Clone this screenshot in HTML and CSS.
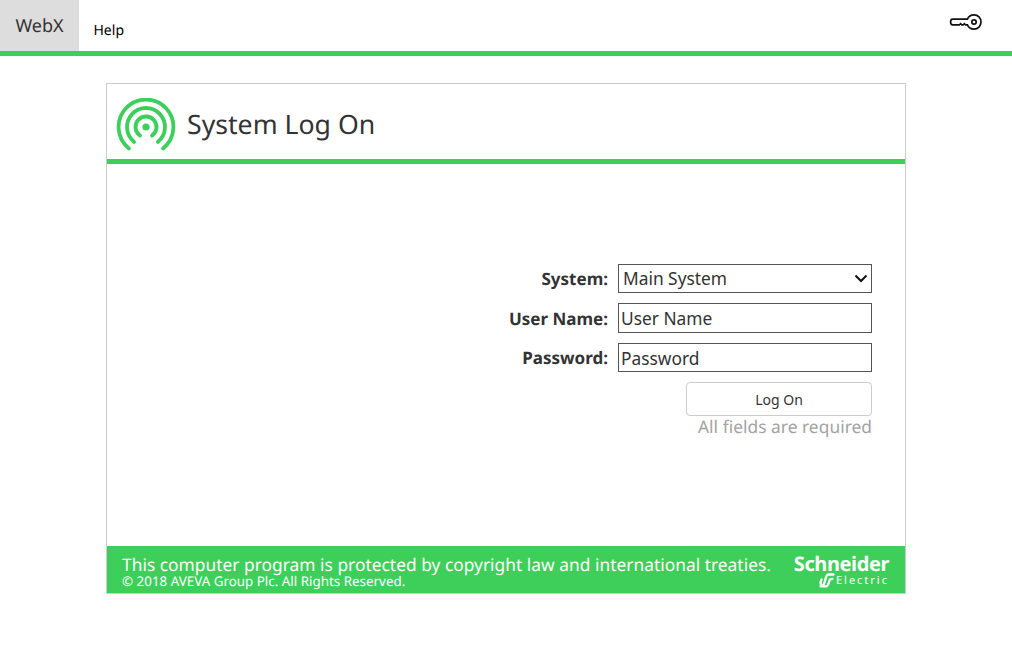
FILE: index.html
```
<!DOCTYPE html>
<html lang="en">
<head>
<meta charset="utf-8">
<title>System Log On</title>
<link rel="stylesheet" href="styles.css">
</head>
<body>
<header class="topbar">
  <div class="brand">WebX</div>
  <nav class="nav"><a class="nav-link">Help</a></nav>
  <svg class="key" width="34" height="18" viewBox="0 0 34 18" fill="none" stroke="#111" stroke-width="1.7">
    <path d="M3.6 5.2H18.4C19.5 2.6 22 0.9 25 0.9C29 0.9 32 4 32 8C32 12 29 15.1 25 15.1C22 15.1 19.5 13.4 18.4 10.8H16.5L15.4 9.7L14.2 10.8H12.8L11.6 9.7L10.4 10.8H3.6C2 10.8 1.6 9.5 1.6 8C1.6 6.5 2 5.2 3.6 5.2Z"/>
    <circle cx="25" cy="8" r="2.2"/>
  </svg>
</header>
<main class="card">
  <div class="card-head">
    <svg class="logo" width="60" height="56" viewBox="0 0 60 56" fill="none" stroke="#3ecf5b" stroke-width="3.8" stroke-linecap="round">
      <path d="M13 50.4A27.4 27.4 0 1 1 47 50.4"/>
      <path d="M18.2 43.9A19 19 0 1 1 41.8 43.9"/>
      <path d="M24 37.6A10.5 10.5 0 1 1 36 37.6"/>
      <circle cx="30" cy="29" r="3.6" fill="#3ecf5b" stroke="none"/>
    </svg>
    <h1 class="title">System Log On</h1>
  </div>
  <div class="card-body">
    <form class="form">
      <div class="row">
        <label class="label">System:</label>
        <select class="field select"><option>Main System</option></select>
      </div>
      <div class="row">
        <label class="label label-low">User Name:</label>
        <input class="field" type="text" value="User Name">
      </div>
      <div class="row">
        <label class="label">Password:</label>
        <input class="field field-short" type="text" value="Password">
      </div>
      <button class="button" type="button">Log On</button>
      <div class="hint">All fields are required</div>
    </form>
  </div>
  <footer class="card-foot">
    <div class="legal">
      <div class="legal-main">This computer program is protected by copyright law and international treaties.</div>
      <div class="legal-small">© 2018 AVEVA Group Plc. All Rights Reserved.</div>
    </div>
    <div class="se">
      <div class="se-name">Schneider</div>
      <div class="se-sub">
        <svg width="16" height="15" viewBox="0 0 16 15" fill="none" stroke="#fff" stroke-width="2.3" stroke-linecap="round">
          <path d="M14.5 1.5H9.5C7 1.5 6.8 5 5.8 8.5C5.2 11 4.2 13.4 1.5 13.4"/>
          <path d="M2.6 6.5C1 9 1.2 13.4 4.5 13.4H7C9.2 13.4 9.8 10 10.6 7C11 6 11.8 5.8 13.5 5.8"/>
        </svg>
        <span class="se-electric">Electric</span>
      </div>
    </div>
  </footer>
</main>
</body>
</html>
```
FILE: styles.css
```
* { box-sizing: border-box; }
html, body { margin: 0; padding: 0; }
body {
  width: 1012px;
  height: 650px;
  background: #fff;
  color: #333;
  font-family: "Noto Sans", sans-serif;
  text-rendering: geometricPrecision;
  overflow: hidden;
}
.topbar {
  display: flex;
  height: 56px;
  border-bottom: 5px solid #3ecf5b;
  position: relative;
}
.brand {
  width: 79px;
  background: #ddd;
  color: #333;
  font-size: 18px;
  line-height: 53px;
  height: 51px;
  text-align: center;
}
.nav { display: flex; padding-left: 14.5px; }
.nav-link {
  color: #000;
  font-size: 14px;
  line-height: 62px;
  height: 51px;
}
.key { position: absolute; left: 949px; top: 14px; }
.card {
  width: 800px;
  height: 511px;
  margin: 27px 0 0 106px;
  border: 1px solid #ccc;
  display: flex;
  flex-direction: column;
}
.card-head {
  height: 80px;
  flex: none;
  border-bottom: 5px solid #3ecf5b;
  display: flex;
  align-items: center;
  padding: 4px 0 0 9px;
  gap: 11px;
}
.logo { flex: none; align-self: flex-start; margin-top: 10px; }
.title {
  margin: 0;
  font-size: 26.67px;
  font-weight: 400;
  color: #333;
}
.card-body {
  flex: 1;
  display: flex;
  justify-content: flex-end;
  padding: 100px 33px 0 0;
}
.form {
  display: flex;
  flex-direction: column;
  align-items: flex-end;
}
.row {
  display: flex;
  align-items: center;
  gap: 10px;
  margin-bottom: 10px;
}
.label {
  font-size: 17px;
  font-weight: 700;
  color: #333;
}
.label-low { padding-top: 1px; }
.field {
  width: 254px;
  height: 30px;
  border: 1px solid #555;
  border-radius: 0;
  background: #fff;
  color: #333;
  font-family: inherit;
  font-size: 17.33px;
  padding: 0 2px;
  outline: none;
}
.field-short { height: 29px; }
.select {
  height: 29px;
  padding: 0 0 2px 4px;
  appearance: none;
  background: #fff url("data:image/svg+xml,%3Csvg xmlns='http://www.w3.org/2000/svg' width='14' height='9'%3E%3Cpath d='M1.5 1.5L7 7L12.5 1.5' fill='none' stroke='%23111' stroke-width='2'/%3E%3C/svg%3E") no-repeat right 3px center;
}
.button {
  width: 186px;
  height: 34px;
  border: 1px solid #ccc;
  border-radius: 4px;
  background: #fff;
  color: #333;
  font-family: inherit;
  font-size: 14px;
  padding: 0;
}
.hint {
  color: #a3a3a3;
  font-size: 17.33px;
  line-height: 22px;
  letter-spacing: 0.04px;
}
.card-foot {
  height: 47px;
  flex: none;
  background: #3ecf5b;
  color: #fff;
  display: flex;
  justify-content: space-between;
  padding: 0 16px 0 15px;
}
.legal { padding-top: 10px; }
.legal-main { font-size: 17.33px; line-height: 18px; white-space: nowrap; letter-spacing: 0.025px; }
.legal-small { font-size: 13.33px; line-height: 14px; letter-spacing: 0.025px; }
.se {
  display: flex;
  flex-direction: column;
  align-items: flex-end;
  padding-top: 7px;
}
.se-name {
  font-size: 20px;
  font-weight: 700;
  line-height: 21px;
  letter-spacing: -0.4px;
}
.se-sub {
  display: flex;
  align-items: center;
  gap: 1px;
  margin-top: -1px;
}
.se-electric {
  font-size: 11px;
  line-height: 14px;
  letter-spacing: 2px;
}
```
